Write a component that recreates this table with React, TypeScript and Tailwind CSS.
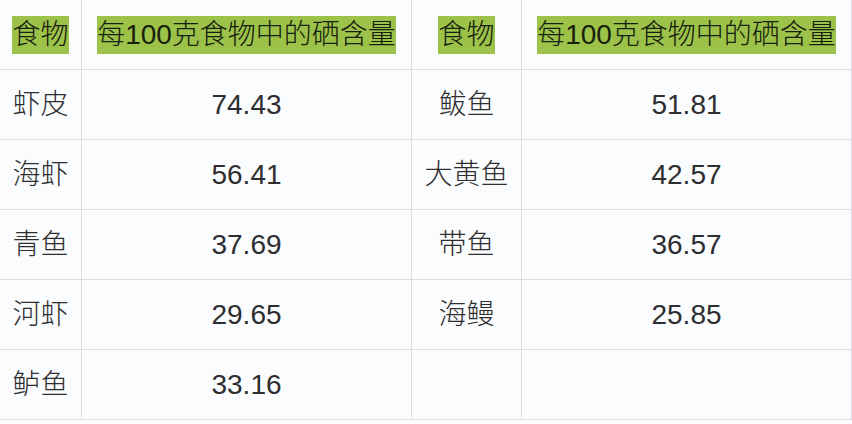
const rows: [string, string, string, string][] = [
  ["虾皮", "74.43", "鲅鱼", "51.81"],
  ["海虾", "56.41", "大黄鱼", "42.57"],
  ["青鱼", "37.69", "带鱼", "36.57"],
  ["河虾", "29.65", "海鳗", "25.85"],
  ["鲈鱼", "33.16", "", ""],
];

const cell =
  "h-[70px] flex items-center justify-center border-r border-b border-[#dcdde0]";

function Mark({ children }: { children: React.ReactNode }) {
  return <span className="bg-[#9cc24a] text-[#16200c] leading-[38px]">{children}</span>;
}

export default function App() {
  return (
    <div
      className="w-[852px] h-[424px] bg-[#fbfcfd] text-[#2e2e30] text-[28px] font-light overflow-hidden"
      style={{ fontFamily: '"Liberation Sans", "Noto Sans CJK SC", sans-serif' }}
    >
      <div className="grid grid-cols-[82px_330px_110px_330px]">
        <div className={cell}><Mark>食物</Mark></div>
        <div className={cell}><Mark>每100克食物中的硒含量</Mark></div>
        <div className={cell}><Mark>食物</Mark></div>
        <div className={cell}><Mark>每100克食物中的硒含量</Mark></div>
        {rows.map((r, i) =>
          r.map((t, j) => (
            <div key={`${i}-${j}`} className={cell}>
              {t}
            </div>
          ))
        )}
      </div>
    </div>
  );
}
